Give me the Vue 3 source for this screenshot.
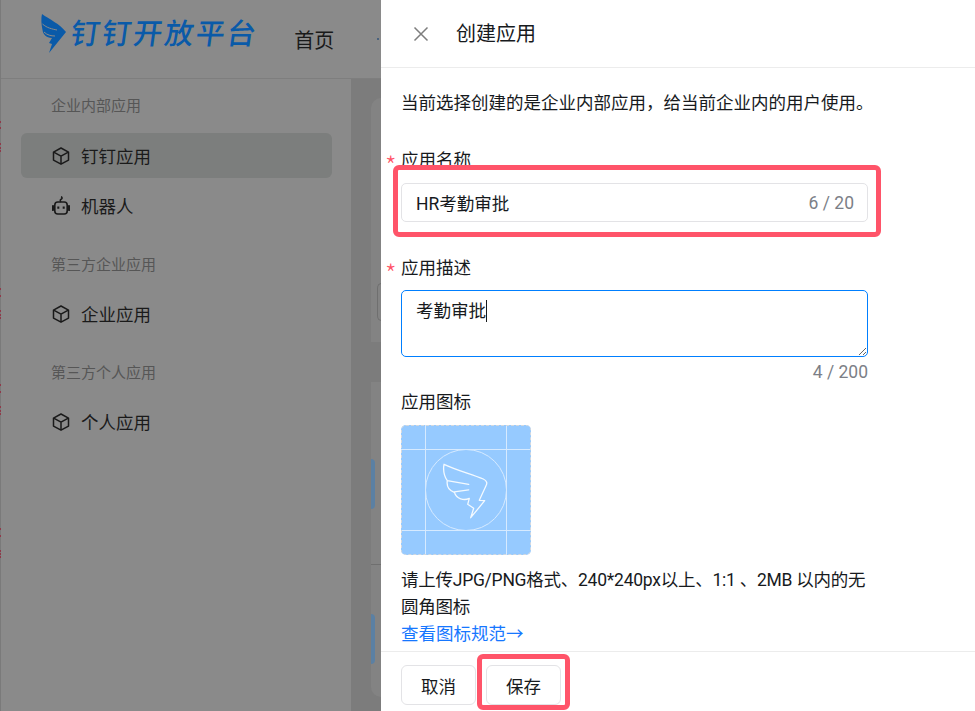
<script setup>
const sideGroups = [
  { title: '企业内部应用', items: [{ name: '钉钉应用', icon: 'cube', active: true }, { name: '机器人', icon: 'robot' }] },
  { title: '第三方企业应用', items: [{ name: '企业应用', icon: 'cube' }] },
  { title: '第三方个人应用', items: [{ name: '个人应用', icon: 'cube' }] }
]
const edgeMarks = [121, 127, 143, 147, 150, 288, 295, 310, 314, 317, 384, 391, 406, 410, 413, 528, 535, 550, 553, 556]
</script>

<template>
  <div class="app">
    <div class="back">
      <svg class="edge" width="1" height="711" aria-hidden="true">
        <rect x="0" y="0" width="1" height="711" fill="#7a7a7a" />
        <rect v-for="y in edgeMarks" :key="y" x="0" :y="y" width="1" height="2" fill="#8f3a4a" />
      </svg>
      <header class="topbar">
        <div class="logo">
          <svg class="logo-wing" width="26" height="40" viewBox="0 0 26 40">
            <path d="M1 0C8 5 19 10 25 18L8 39l3-9-3-1 3-5C5 24 2 20 1.500 16 .2 10 0 4 1 0z" fill="#0a5aa8" />
            <path d="M1.500 10C6 14 11 15 16 16M3 18c3 3 7 4 11 4" fill="none" stroke="#8a8a8a" stroke-width="1" />
          </svg>
          <span class="logo-text">钉钉开放平台</span>
        </div>
        <span class="nav-item">首页</span>
        <span class="nav-dot"></span>
      </header>
      <div class="back-main">
        <nav class="side">
          <section v-for="g in sideGroups" :key="g.title" class="side-group">
            <div class="side-title">{{ g.title }}</div>
            <div class="side-items">
              <div v-for="it in g.items" :key="it.name" class="side-item" :class="{ active: it.active }">
                <svg v-if="it.icon === 'cube'" class="side-icon" width="18" height="18" viewBox="0 0 18 18" fill="none" stroke="#1a1a1a" stroke-width="1.500" stroke-linejoin="round">
                  <path d="M9 1l7.500 4.100v8L9 17.200 1.500 13.100v-8z" />
                  <path d="M1.700 5.200L9 9.200l7.300-4M9 9.200v7.800" />
                </svg>
                <svg v-else class="side-icon" width="18" height="20" viewBox="0 0 18 20" fill="none" stroke="#1a1a1a" stroke-width="1.600" stroke-linejoin="round">
                  <rect x="2.800" y="6" width="12.400" height="12" rx="3" />
                  <path d="M9 6c-1.500-1.500-.5-2.500.5-3S10 1 9 .8" />
                  <path d="M1 10v4M17 10v4" stroke-width="2.200" stroke-linecap="round" />
                  <path d="M6.300 10.500v2.200M11.700 10.500v2.200" stroke-width="2" />
                </svg>
                <span>{{ it.name }}</span>
              </div>
            </div>
          </section>
        </nav>
        <div class="strip">
          <div class="card card-a"><div class="ghost-input"></div></div>
          <div class="card card-b">
            <div class="pill pill-a"></div>
            <div class="card-line"></div>
            <div class="pill pill-b"></div>
          </div>
        </div>
      </div>
    </div>

    <aside class="drawer">
      <header class="drawer-head">
        <svg class="close" width="16" height="16" viewBox="0 0 16 16" fill="none" stroke="#7d7d7d" stroke-width="1.500">
          <path d="M1.500 1.500l13 13M14.500 1.500l-13 13" />
        </svg>
        <span class="drawer-title">创建应用</span>
      </header>

      <div class="drawer-body">
        <p class="intro">当前选择创建的是企业内部应用，给当前企业内的用户使用。</p>

        <div class="label label-name"><span class="star">*</span>应用名称</div>
        <div class="input">
          <span>HR考勤审批</span>
          <span class="count">6 / 20</span>
          <span class="mark mark-input"></span>
        </div>

        <div class="label label-desc"><span class="star">*</span>应用描述</div>
        <div class="textarea">考勤审批<span class="caret"></span></div>
        <div class="count count-desc">4 / 200</div>

        <div class="label label-icon">应用图标</div>
        <div class="icon-sample">
          <svg width="130" height="130" viewBox="0 0 130 130" fill="none">
            <path d="M24.500 0v130M105.500 0v130M0 24.500h130M0 105.500h130" stroke="#d6eaff" />
            <circle cx="65" cy="65" r="40.500" stroke="#d6eaff" />
            <path d="M43 39.300C55 45 70 49 82.300 54c4 2 4 4.500 2.700 6.700L78.300 75.300l5.400.4-14 17 3-9.400-6-4 1.600-6c-5 2.500-13 1-15-6.500l14.400-2M53.300 67.300C48 65.500 45.500 61 46.300 55.700l21.400 3.600M46.300 55.700C42.500 50 42 45 43 39.300" stroke="#f4faff" stroke-width="1.300" stroke-linejoin="round" stroke-linecap="round" />
          </svg>
        </div>

        <p class="help">请上传JPG/PNG格式、240*240px以上、1:1 、2MB 以内的无圆角图标</p>
        <a class="link">查看图标规范→</a>
      </div>

      <footer class="drawer-foot">
        <button class="btn" type="button">取消</button>
        <button class="btn" type="button">保存<span class="mark mark-save"></span></button>
      </footer>
    </aside>
  </div>
</template>

<style>
html, body { margin: 0; overflow: hidden; background: #fff; }
</style>

<style scoped>
.app {
  display: flex;
  width: 975px;
  height: 711px;
  overflow: hidden;
  color: #171a1d;
  font-family: Roboto, "Noto Sans CJK SC", sans-serif;
  font-size: 17.5px;
}

/* dimmed page behind the drawer */
.back {
  position: relative;
  flex: 0 0 381px;
  min-width: 0;
  display: flex;
  flex-direction: column;
  overflow: hidden;
  background: #8a8a8a;
}
.edge { position: absolute; left: 0; top: 0; }
.topbar {
  display: flex;
  align-items: center;
  flex: 0 0 79px;
  box-sizing: border-box;
  border-bottom: 1px solid #7e7e7e;
  padding-left: 41px;
}
.logo { display: flex; align-items: center; gap: 4px; margin-top: -11px; }
.logo-wing { flex: none; }
.logo-text {
  display: inline-block;
  color: #0a5aa8;
  font-size: 29px;
  font-weight: 500;
  letter-spacing: 2.200px;
  line-height: 40px;
  white-space: nowrap;
  transform: skewX(-8deg);
}
.nav-item { margin-left: 36px; font-size: 20px; color: #1a1a1a; }
.nav-dot { width: 2px; height: 2px; margin-left: 43px; border-radius: 50%; background: #33557a; }

.back-main { flex: 1; display: flex; min-height: 0; }
.side { flex: 0 0 351px; box-sizing: border-box; padding: 16px 19px 0 21px; }
.side-group + .side-group { margin-top: 26px; }
.side-title {
  padding: 1px 0 0 30px;
  margin-bottom: 16px;
  font-size: 15px;
  line-height: 20px;
  color: #565656;
}
.side-group:first-child .side-title { margin-bottom: 17px; }
.side-items { display: flex; flex-direction: column; gap: 5px; }
.side-item {
  display: flex;
  align-items: center;
  gap: 11px;
  height: 45px;
  padding: 0 0 0 31px;
  box-sizing: border-box;
  border-radius: 6px;
  color: #1a1a1a;
}
.side-item.active { background: #7c7e7d; }
.side-icon { flex: none; }

.strip { flex: 1; min-width: 0; box-sizing: border-box; padding: 19px 0 0 20px; background: #7c7c7c; overflow: hidden; }
.card { background: #838383; }
.card-a { height: 244px; border-top-left-radius: 10px; padding: 185px 0 0 6px; box-sizing: border-box; }
.ghost-input { width: 20px; height: 38px; box-sizing: border-box; border: 1px solid #6f6f6f; border-right: 0; border-radius: 5px 0 0 5px; }
.card-b { height: 315px; margin-top: 40px; border-bottom-left-radius: 10px; padding-top: 77px; box-sizing: border-box; }
.pill { width: 4px; height: 50px; background: #5b80a3; border-radius: 0 5px 5px 0; }
.card-line { height: 1px; margin: 55px 0 49px; background: #6f6f6f; }

/* drawer */
.drawer { flex: 1; display: flex; flex-direction: column; background: #fff; min-width: 0; }
.drawer-head {
  display: flex;
  align-items: center;
  gap: 27px;
  flex: 0 0 68px;
  box-sizing: border-box;
  padding-left: 32px;
  border-bottom: 1px solid #ececec;
}
.close { flex: none; }
.drawer-title { font-size: 20px; line-height: 28px; }

.drawer-body { flex: 1; min-height: 0; padding: 23px 0 0 20px; width: 467px; }
.intro { margin: 0; line-height: 24px; white-space: nowrap; }
.label { position: relative; line-height: 24px; }
.label-name { margin-top: 33px; margin-bottom: 11px; }
.label-desc { margin-top: 34px; margin-bottom: 10px; }
.label-icon { margin-top: 6px; margin-bottom: 11px; }
.star {
  position: absolute;
  left: -16px;
  top: 5px;
  color: #ff5469;
  font-family: "Noto Sans CJK SC", sans-serif;
  font-size: 26px;
  font-weight: 300;
}
.input {
  position: relative;
  display: flex;
  align-items: center;
  justify-content: space-between;
  height: 39px;
  box-sizing: border-box;
  padding: 0 13px 0 14px;
  border: 1px solid #e3e3e6;
  border-radius: 5px;
}
.count { color: #7c7f87; }
.count-desc { margin-top: 3px; text-align: right; line-height: 24px; }
.textarea {
  height: 67px;
  box-sizing: border-box;
  padding: 8px 14px;
  line-height: 24px;
  border: 1px solid #007fff;
  border-radius: 5px;
  overflow: auto;
  resize: vertical;
}
.caret { display: inline-block; width: 1px; height: 22px; margin-left: 0; vertical-align: -5px; background: #171a1d; }
.icon-sample {
  width: 130px;
  height: 130px;
  box-sizing: border-box;
  background: #96caff;
  border-radius: 5px;
  outline: 1px dashed #d4d9df;
  outline-offset: -1px;
  overflow: hidden;
}
.icon-sample svg { display: block; }
.help { margin: 12px 0 0; line-height: 27px; letter-spacing: -0.250px; }
.link { display: block; line-height: 27px; color: #1677ff; cursor: pointer; }

.drawer-foot {
  flex: 0 0 60px;
  display: flex;
  gap: 10px;
  box-sizing: border-box;
  padding: 13px 0 0 20px;
  border-top: 1px solid #ececec;
}
.btn {
  position: relative;
  width: 75px;
  height: 40px;
  padding: 0;
  background: #fff;
  border: 1px solid #e3e3e6;
  border-radius: 6px;
  color: #171a1d;
  font: inherit;
}

/* red annotation frames drawn on top of the screenshot */
.mark { position: absolute; box-sizing: border-box; border: 5px solid #ff5469; border-radius: 6px; pointer-events: none; }
.mark-input { inset: -19px -14px -16px -9px; }
.mark-save { inset: -12px -10px -6px -10px; }
</style>
